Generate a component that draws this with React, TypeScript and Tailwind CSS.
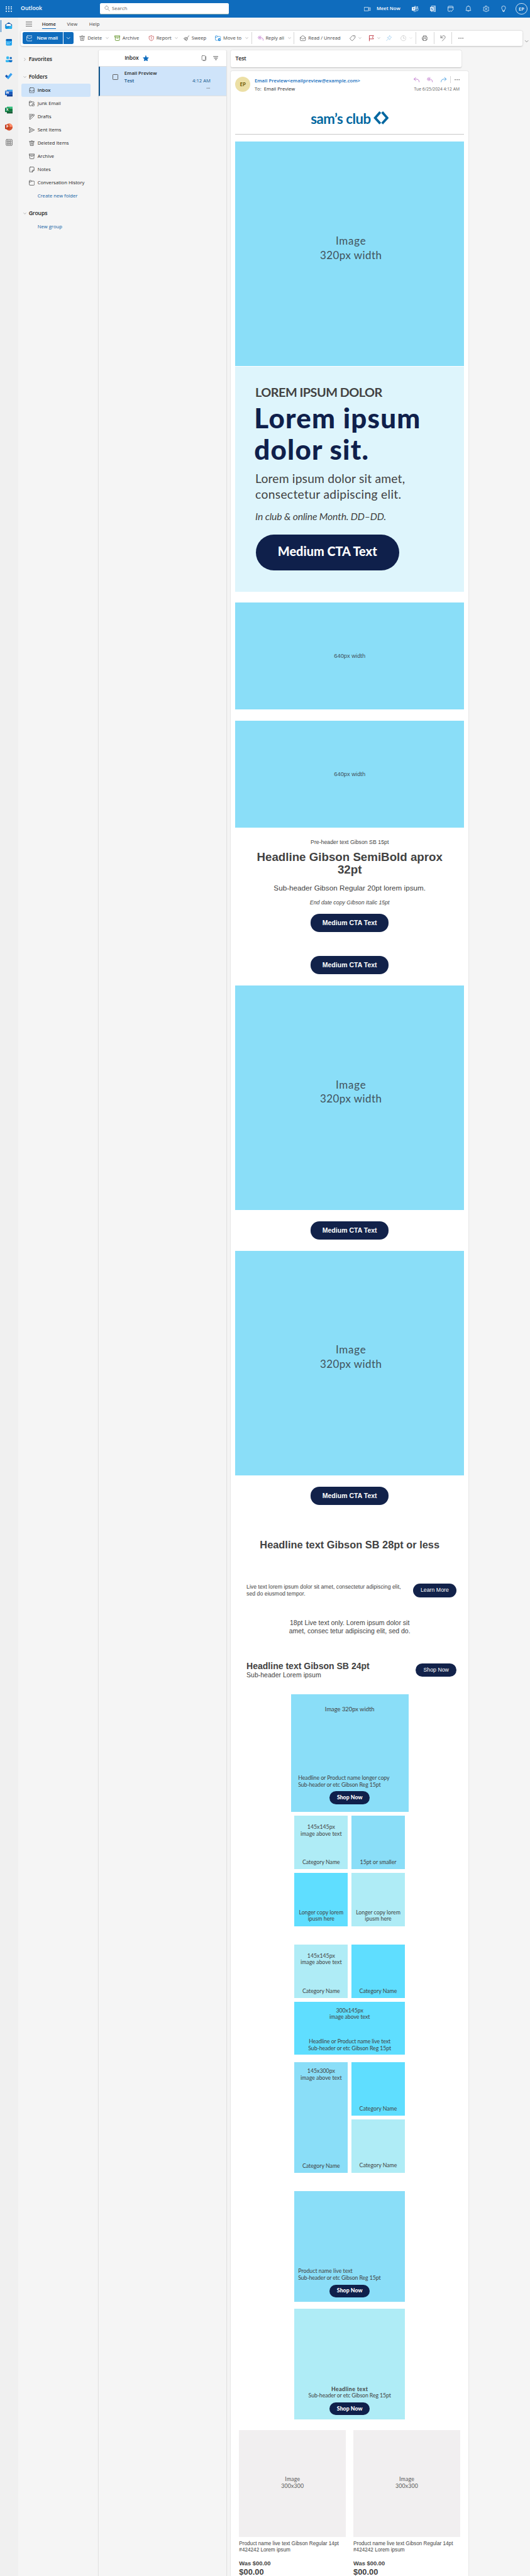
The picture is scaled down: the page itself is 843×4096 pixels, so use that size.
import type { ReactNode } from "react";

const lato = "font-['Lato','Open_Sans',sans-serif]";
const chev = "M4 6l4 4 4-4";

function Svg({ d, size = "size-4", color = "text-[#424242]", sw = 1.1, children }: { d?: string; size?: string; color?: string; sw?: number; children?: ReactNode }) {
  return (
    <svg viewBox="0 0 16 16" className={`${size} ${color} shrink-0`} fill="none" stroke="currentColor" strokeWidth={sw} strokeLinecap="round" strokeLinejoin="round">
      {d && <path d={d} />}
      {children}
    </svg>
  );
}

const icons = {
  trash: "M1 3.5h14M2.8 3.5l1.2 11h8l1.2-11M6 3.5V2.2C6 1 10 1 10 2.2v1.3M6.7 6.5v5M9.3 6.5v5",
  archive: "M1.2 1.5h13.6v3.4H1.2zM2.3 5v7.5a2 2 0 0 0 2 2h7.4a2 2 0 0 0 2-2V5M6.3 8h3.4",
  inbox: "M4 1h8a2 2 0 0 1 2 2v10a2 2 0 0 1-2 2H4a2 2 0 0 1-2-2V3a2 2 0 0 1 2-2zM2 8.5h3.5c.3 3 4.700 3 5 0H14",
  junk: "M6 14H3a2 2 0 0 1-2-2V3a1.500 1.500 0 0 1 1.500-1.500h3L7.500 3.500H12a2 2 0 0 1 2 2V6M1 5h4l2.500-1.500M11.500 8a3.600 3.600 0 1 0 .01 0M9 14l5-5",
  drafts: "M1 1.500h9M1 5h6M1 8.500h3M2 15l1-4.500L11.500 2a1.800 1.800 0 0 1 3 2.500L6 13zM10 3.500l3 2.500",
  sent: "M1 1l14 7-14 7 2-7zM3 8h6",
  notes: "M4 1h8a2 2 0 0 1 2 2v6.500L9 15H4a2 2 0 0 1-2-2V3a2 2 0 0 1 2-2zM14 9.500h-3.500a1.500 1.500 0 0 0-1.500 1.500v4",
  folder: "M3 14.500a2 2 0 0 1-2-2V3a1.500 1.500 0 0 1 1.500-1.500h3L7.500 3.500H13a2 2 0 0 1 2 2v7a2 2 0 0 1-2 2zM1 5.500h4l2.500-2",
  shield: "M8 1c2 1.500 4 2 6 2v5c0 3.500-2.500 6-6 7-3.500-1-6-3.500-6-7V3c2 0 4-.5 6-2zM8 4.500V9M8 11.300v.2",
  sweep: "M15 1L10 7M6 6l5 4.500-3.500 4.500L1 9.500zM7 6.500c1.500-1.200 4 .8 3.500 3M3.500 8.500l4.500 4M4 12l1.500-2",
  reply: "M5.500 2L1 6.500 5.500 11M1 6.500h6c4.500 0 8 2.500 8 7.500",
  replyAll: "M4.500 2L.7 6.500l3.800 4.500M8.500 2L4.700 6.500l3.800 4.500M4.700 6.500H8c4 0 7 2.500 7 7.500",
  forward: "M10.500 2L15 6.500 10.500 11M15 6.500H9c-4.500 0-8 2.500-8 7.500",
  read: "M1 6l7-5 7 5v7a1.800 1.800 0 0 1-1.800 1.800H2.800A1.800 1.800 0 0 1 1 13zM1 6.500l7 4 7-4",
  tag: "M9 1h4.500A1.500 1.500 0 0 1 15 2.500V7l-7 7.500a1.500 1.500 0 0 1-2 0L1.500 10a1.500 1.500 0 0 1 0-2zM11.500 4.300v.2",
  flag: "M2.500 15.500V1H14l-3 4.500 3 4.500H2.500",
  pin: "M10 1l5 5-4 2-1 4.500L3.500 6 8 5zM6.500 9.500L1 15",
  clock: "M8 1a7 7 0 1 0 .01 0M8 4v4.500h3.500",
  print: "M4 5V1.500h8V5M4 12H2.500A1.500 1.500 0 0 1 1 10.500V7a2 2 0 0 1 2-2h10a2 2 0 0 1 2 2v3.500a1.500 1.500 0 0 1-1.500 1.500H12M4 9h8v5.500H4z",
  undo: "M2 1v6h6M2 7l4.500-4.500c4-3.500 9.500 1 6.500 5.500L6 15.500",
};

function Dots() {
  return (
    <Svg size="h-4 w-[14px]">
      <g fill="#424242" stroke="none"><circle cx="2" cy="8" r="1.500" /><circle cx="8" cy="8" r="1.500" /><circle cx="14" cy="8" r="1.500" /></g>
    </Svg>
  );
}

function TopBar() {
  return (
    <header className="flex h-12 shrink-0 items-center bg-[#0f6cbd] text-white">
      <div className="ml-4 grid grid-cols-3 gap-x-[3px] gap-y-[2.500px]">
        {Array.from({ length: 9 }, (_, i) => <i key={i} className="size-[3.500px] rounded-full bg-white" />)}
      </div>
      <b className="ml-[24px] w-[216px] text-[15px] font-semibold">Outlook</b>
      <div className="flex h-8 w-[350px] items-center rounded-[4px] border-b border-[#8aa] bg-white pl-[11px]">
        <Svg color="text-[#616161]" size="size-[15px]" d="M6.500 1a5 5 0 1 0 .01 0M10.300 10l4.700 5" />
        <span className="ml-[6px] text-[13.100px] text-[#616161]">Search</span>
      </div>
      <div className="ml-[367px] flex items-center">
        <Svg size="size-[18px]" color="text-white" d="M1 4h10v8.500H1zM11 7l4-2.500v7.500l-4-2.500" />
        <span className="ml-4 w-[66px] whitespace-nowrap text-[13.100px] font-semibold">Meet Now</span>
        <svg viewBox="0 0 18 18" className="ml-[30px] size-[18px]" fill="none" stroke="#fff" strokeWidth="1.300">
          <circle cx="9" cy="3.500" r="2" /><circle cx="15" cy="4" r="1.500" /><path d="M9 7h8v4a3 3 0 0 1-3 3M12 7v6a4 4 0 0 1-7 2.500" /><path d="M1 4.500h7.500V13H1z" fill="#fff" /><path d="M3 7h4M5 7v4" stroke="#0f6cbd" />
        </svg>
        <svg viewBox="0 0 16 18" className="ml-[31px] h-[18px] w-4" fill="none" stroke="#fff" strokeWidth="1.300">
          <path d="M4 4V1h11v16H4v-3M12 1v16M12 6.500h3M12 11.500h3" /><path d="M.5 4.500h9v9h-9z" fill="#fff" /><path d="M3 12V6l4 6V6" stroke="#0f6cbd" />
        </svg>
        <Svg size="ml-[33px] size-[17px]" color="text-white" sw={1.3} d="M6 14.500H3a2 2 0 0 1-2-2v-9a2 2 0 0 1 2-2h9a2 2 0 0 1 2 2V7M1 5h13M7 12.500l2.500 2.500L15 8.500" />
        <Svg size="ml-[31px] size-[17px]" color="text-white" sw={1.2} d="M8 1a5 5 0 0 0-5 5v3.500L1.800 12.500h12.400L13 9.500V6a5 5 0 0 0-5-5zM6 12.700c0 2.800 4 2.800 4 0" />
        <Svg size="ml-[30px] size-[18px]" color="text-white" sw={1.2} d="M6.500 1h3l.5 2 1.600.9 2-.6 1.400 2.500L13.600 7.200v1.700L15 10.300l-1.500 2.500-2-.6-1.500.9-.5 2h-3l-.5-2-1.600-.9-2 .6L1 10.300l1.400-1.400V7.200L1 5.800l1.500-2.500 2 .6L6 3zM8 6a2 2 0 1 0 .01 0" />
        <Svg size="ml-[30px] size-[17px]" color="text-white" sw={1.2} d="M6 12.500C6 10 3 9 3 5.800a5 5 0 0 1 10 0C13 9 10 10 10 12.500zM6 12.500v1a2 2 0 0 0 4 0v-1" />
        <div className="ml-[24px] flex size-8 items-center justify-center rounded-full border border-white/80 text-[12.500px] font-semibold">EP</div>
      </div>
    </header>
  );
}

function Office({ letter, dark, main, light, round }: { letter: string; dark: string; main: string; light: string; round?: boolean }) {
  return (
    <div className="relative h-5 w-[21px]">
      <svg viewBox="0 0 21 20" className="size-full">
        {round ? (
          <><circle cx="11" cy="10" r="9.500" fill={light} /><path d="M11 .5A9.500 9.500 0 0 1 20.500 10H11z" fill="#ff8f6b" /><path d="M1.500 10h19a9.500 9.500 0 0 1-19 0z" fill="#d35230" /></>
        ) : (
          <><path d="M5 1h15.500v5H5z" fill={light} /><path d="M5 6h15.500v8H5z" fill={main} /><path d="M5 14h15.500v5.500H5z" fill={dark} /></>
        )}
        <rect x="0" y="4" width="12" height="12" rx="1" fill={round ? dark : main} />
      </svg>
      <b className="absolute left-0 top-[4px] w-3 text-center text-[9.500px] leading-3 text-white">{letter}</b>
    </div>
  );
}

function Rail() {
  return (
    <nav className="relative flex w-[49px] shrink-0 flex-col items-center bg-[#f0f0f0] pt-3">
      <div className="absolute left-[2px] top-[7px] h-8 w-[2px] bg-[#0f6cbd]" />
      <div className="flex h-[46px] items-start"><svg viewBox="0 0 20 18" className="h-5 w-[20px]"><path d="M1 6l9-6 9 6v9a3 3 0 0 1-3 3H4a3 3 0 0 1-3-3z" fill="#0f56a8" /><path d="M3.500 5.500C5 3.500 15 3.500 16.500 5.500V10h-13z" fill="#fff" /><path d="M1 7.500l9 5 9-5V15a3 3 0 0 1-3 3H4a3 3 0 0 1-3-3z" fill="#28b5f0" /><path d="M1 8l10 6-7 4a3 3 0 0 1-3-3z" fill="#1493e0" /></svg></div>
      <div className="flex h-[46px] items-start"><svg viewBox="0 0 18 18" className="size-[18px]"><rect x="1" y="0" width="16" height="18" rx="2.500" fill="#22a5f0" /><path d="M1 5V2.500A2.500 2.500 0 0 1 3.500 0h11A2.500 2.500 0 0 1 17 2.500V5z" fill="#0f63b5" /><g fill="#fff"><path d="M8 8h2v2H8zM12 8h2v2h-2zM4 8h2v2H4zM4 12h2v2H4zM8 12h2v2H8z" /></g></svg></div>
      <div className="flex h-[46px] items-start"><svg viewBox="0 0 18 18" className="size-[18px]"><circle cx="5.500" cy="5" r="4" fill="#35b8f1" /><circle cx="14" cy="5.500" r="3" fill="#1268bd" /><path d="M0 11h10v3.500c0 4-10 4-10 0z" fill="#35b8f1" /><path d="M8 11h10v2.500c0 4-6 4.500-9 2.500z" fill="#1272c9" /></svg></div>
      <div className="flex h-[45px] items-start"><svg viewBox="0 0 20 18" className="h-[18px] w-5"><path d="M0 8.500l4-4 5 5-4 4.500z" fill="#1755b0" /><path d="M4.500 13L15.500 0 20 4 8.500 17.500z" fill="#37a0f0" /></svg></div>
      <div className="h-[46px]"><Office letter="W" dark="#103f91" main="#185abd" light="#41a5ee" /></div>
      <div className="h-[46px]"><Office letter="X" dark="#185c37" main="#107c41" light="#33c481" /></div>
      <div className="h-[43px]"><Office letter="P" dark="#c43e1c" main="#c43e1c" light="#ed6c47" round /></div>
      <Svg size="size-[19px]" color="text-[#616161]" sw={1.2} d="M3 1h10a2 2 0 0 1 2 2v10a2 2 0 0 1-2 2H3a2 2 0 0 1-2-2V3a2 2 0 0 1 2-2zM4 4h3v3H4zM9.300 4h3v3h-3zM4 9.300h3v3H4zM9.300 9.300h3v3h-3z" />
    </nav>
  );
}

function Tool({ w, icon, label, chevron, color }: { w: string; icon: ReactNode; label?: string; chevron?: string; color?: string }) {
  return (
    <div className={`flex shrink-0 items-center ${w}`}>
      {icon}
      {label && <span className="ml-[6px] whitespace-nowrap">{label}</span>}
      {chevron && <span className={`ml-auto flex ${chevron}`}><Svg size="-mx-[2px] size-3" d={chev} color={color ?? "text-[#757575]"} /></span>}
    </div>
  );
}

function Bar({ w }: { w: string }) {
  return <div className={`h-8 shrink-0 ${w}`}><div className="h-8 w-px bg-[#d6d6d6]" /></div>;
}

function Ribbon() {
  return (
    <div className="flex items-end">
      <div className="ml-2 flex h-10 w-[1363px] items-center rounded-[4px] bg-white pl-1 shadow-[0_1px_4px_rgba(0,0,0,0.22)]">
        <div className="flex h-8 w-[110px] items-center rounded-l-[4px] bg-[#0f6cbd] pl-[10px] text-white">
          <Svg size="size-[17px]" color="text-white" sw={1.2} d="M3 1.500h10a2 2 0 0 1 2 2v9a2 2 0 0 1-2 2H3a2 2 0 0 1-2-2v-9a2 2 0 0 1 2-2zM1 4.500l7 4.500 7-4.500" />
          <span className="ml-3 font-semibold tracking-[-0.020em]">New mail</span>
        </div>
        <div className="ml-px mr-4 flex h-8 w-7 items-center justify-center rounded-r-[4px] bg-[#0f6cbd]"><Svg color="text-white" sw={1.4} d={chev} /></div>
        <Tool w="w-[95px]" label="Delete" chevron="pr-4" icon={<Svg d={icons.trash} />} />
        <Tool w="w-[92px]" label="Archive" icon={<Svg d={icons.archive} color="text-[#498205]" sw={1.3} />} />
        <Tool w="w-[96px]" label="Report" chevron="pr-4" icon={<Svg d={icons.shield} color="text-[#bc2f32]" />} />
        <Tool w="w-[86px]" label="Sweep" icon={<Svg d={icons.sweep} />} />
        <Tool w="w-[99px]" label="Move to" chevron="pr-[9px]" icon={<Svg d="M7 14H3a2 2 0 0 1-2-2V3a1.500 1.500 0 0 1 1.500-1.500h3L7.500 3.500H13a2 2 0 0 1 2 2V7M1 5.500h4l2.500-2" color="text-[#0078d4]"><circle cx="12" cy="12" r="4" fill="#0078d4" stroke="none" /><path d="M10 12h4M12.500 10.500L14 12l-1.500 1.500" stroke="#fff" /></Svg>} />
        <Bar w="w-4" />
        <Tool w="w-[99px]" label="Reply all" chevron="pr-2" icon={<Svg d={icons.replyAll} color="text-[#a33db5]" />} />
        <Bar w="w-[17px]" />
        <Tool w="w-[135px]" label="Read / Unread" icon={<Svg d={icons.read} />} />
        <Tool w="w-[50px]" chevron="pr-[18px]" icon={<Svg d={icons.tag} />} />
        <Tool w="w-[49px]" chevron="pr-[17px]" icon={<Svg d={icons.flag} color="text-[#b10e1c]" sw={1.3} />} />
        <Tool w="w-[39px]" icon={<Svg d={icons.pin} color="text-[#8cc4ee]" />} />
        <Tool w="w-[41px]" chevron="pr-[9px]" color="text-[#c8c8c8]" icon={<Svg d={icons.clock} color="text-[#bdbdbd]" />} />
        <Bar w="w-[17px]" />
        <Tool w="w-8" icon={<Svg d={icons.print} />} />
        <Bar w="w-[17px]" />
        <Tool w="w-8" icon={<Svg d={icons.undo} />} />
        <Bar w="w-[18px]" />
        <Dots />
      </div>
      <div className="mb-[3px] ml-1"><Svg size="size-4" d={chev} color="text-[#616161]" /></div>
    </div>
  );
}

const folders: [string, string][] = [
  ["Inbox", icons.inbox], ["Junk Email", icons.junk], ["Drafts", icons.drafts], ["Sent Items", icons.sent],
  ["Deleted Items", icons.trash], ["Archive", icons.archive], ["Notes", icons.notes], ["Conversation History", icons.folder],
];

function GroupTitle({ open, children }: { open?: boolean; children: string }) {
  return (
    <div className="flex h-9 items-center pl-[3px] text-[15px] font-semibold tracking-[-0.020em] text-[#242424]">
      <Svg size="size-3" color="text-[#757575]" sw={1.2} d={open ? chev : "M6 3.500l4.500 4.500L6 12.500"} />
      <span className="ml-[5px]">{children}</span>
    </div>
  );
}

function Folders() {
  return (
    <div className="w-[217px] shrink-0 pl-[9px] pr-[20px] pt-[6.500px] text-[13.100px] text-[#242424]">
      <GroupTitle>Favorites</GroupTitle>
      <div className="h-3" />
      <GroupTitle open>Folders</GroupTitle>
      {folders.map(([name, d], i) => (
        <div key={name} className={`flex h-9 items-center rounded-[4px] pl-5 ${i === 0 ? "bg-[#cfe4fa] font-semibold" : ""}`}>
          <Svg d={d} color="text-[#242424]" />
          <span className="ml-2 whitespace-nowrap">{name}</span>
        </div>
      ))}
      <div className="flex h-9 items-center pl-11 text-[#115ea3]">Create new folder</div>
      <div className="h-[11px]" />
      <GroupTitle open>Groups</GroupTitle>
      <div className="flex h-9 items-center pl-11 text-[#115ea3]">New group</div>
    </div>
  );
}

function MessageList() {
  return (
    <div className="w-[351px] shrink-0 rounded-t-[4px] border-x border-[#e2e2e2] shadow-[0_0_2px_rgba(0,0,0,0.12)]">
      <div className="flex h-[45px] items-center rounded-t-[4px] border-b border-[#e0e0e0] bg-white">
        <span className="ml-[71px] text-[14.500px] font-semibold tracking-[-0.020em] text-[#242424]">Inbox</span>
        <Svg size="ml-[11px] size-[17px]" color="text-[#0f6cbd]"><path fill="currentColor" d="M8 1l2.100 4.600 4.900.6-3.600 3.400.9 5L8 12.200 3.700 14.600l.9-5L1 6.200l4.900-.6z" /></Svg>
        <Svg size="ml-[142px] size-[15px]" d="M4 1h6a2 2 0 0 1 2 2v9a2 2 0 0 1-2 2H4a2 2 0 0 1-2-2V3a2 2 0 0 1 2-2zM14 3.500V12c0 2.500-1.500 3.500-4 3.500H6" />
        <Svg size="ml-[17px] size-[15px]" color="text-[#242424]" sw={1.4} d="M1 3.500h14M3.500 8h9M6 12.500h4" />
      </div>
      <div className="flex h-20 border-b border-l-4 border-b-[#e0e0e0] border-l-[#0f548c] bg-[#cfe4fa] text-[13.100px] font-semibold">
        <div className="ml-[35px] mt-5 size-4 rounded-[2px] border-[1.500px] border-[#616161]" />
        <div className="ml-4 flex-1 pr-[43px] pt-[9px] leading-5">
          <div className="text-[#242424]">Email Preview</div>
          <div className="flex justify-between text-[#0f548c]"><span>Test</span><span className="font-medium">4:12 AM</span></div>
          <div className="flex justify-end pt-1"><Svg size="size-[11px]"><g fill="#616161" stroke="none"><circle cx="3" cy="8" r="1.500" /><circle cx="8" cy="8" r="1.500" /><circle cx="13" cy="8" r="1.500" /></g></Svg></div>
        </div>
      </div>
    </div>
  );
}

function MailHeader() {
  return (
    <div className="h-[192px]">
      <div className="flex h-[107px] pt-4">
        <div className="flex size-10 items-center justify-center rounded-full bg-[#ecdfa5] text-[14px] font-semibold text-[#6d5700]">EP</div>
        <div className="ml-3 text-[13.100px] leading-[22px]">
          <div className="font-semibold tracking-[0.005em] text-[#0f6cbd]">Email Preview&lt;emailpreview@example.com&gt;</div>
          <div className="whitespace-pre text-[#424242]">To:  <span className="text-[#242424]">Email Preview</span></div>
        </div>
        <div className="ml-auto pr-[11px]">
          <div className="-mt-[3px] flex h-5 items-center justify-end">
            <Svg d={icons.reply} color="text-[#a33db5]" />
            <Svg size="ml-5 size-4" d={icons.replyAll} color="text-[#a33db5]" />
            <Svg size="ml-5 size-4" d={icons.forward} color="text-[#0078d4]" />
            <div className="ml-[10px] mr-3 h-5 w-px bg-[#d6d6d6]" />
            <Dots />
          </div>
          <div className="mt-2 text-[11.600px] leading-[18px] text-[#616161]">Tue 6/25/2024 4:12 AM</div>
        </div>
      </div>
      <div className={`flex h-16 pl-[204.500px] text-[#0067a0] ${lato}`}>
        <span className="-mt-[2px] w-[164px] whitespace-nowrap text-[38px] font-bold leading-[52px] tracking-[-0.800px]">sam’s club</span>
        <svg viewBox="0 0 42 36" className="ml-[6px] mt-[2.500px] h-9 w-[42px]" fill="none" stroke="#0067a0" strokeWidth="6.500">
          <path d="M18.500 2L4.600 17.800 18.500 33.500M23.500 2l13.900 15.800L23.500 33.500" />
        </svg>
      </div>
      <div className="h-px bg-[#c8c8c8]" />
    </div>
  );
}

function BigImage() {
  return (
    <div className={`h-[611px] bg-[#8adef8] pl-[7px] pt-[250.500px] text-center text-[29px] leading-[39px] text-[#42525c] ${lato}`}>
      <div className="tracking-[1.330px]">Image</div>
      <div className="tracking-[0.770px]">320px width</div>
    </div>
  );
}

function SmallImage() {
  return <div className="h-[290.500px] bg-[#8adef8] pt-[136.500px] text-center text-[16px] leading-5 text-[#42525c]">640px width</div>;
}

function Cta() {
  return <div className="mx-auto flex h-[50px] w-[211px] items-center justify-center whitespace-nowrap rounded-[24px] bg-[#12224a] text-[18px] font-bold text-white">Medium CTA Text</div>;
}

function Hero() {
  return (
    <div className={`mt-[2px] h-[611.500px] whitespace-nowrap bg-[#def5fc] pl-[54px] pt-[50.300px] text-[#424242] ${lato}`}>
      <div className="text-[34px] font-bold leading-10 tracking-[-0.940px]">LOREM IPSUM DOLOR</div>
      <div className="-ml-[3px] mt-[7.600px] text-[75px] font-black leading-[85px] tracking-[2.040px] text-[#0f204b]">Lorem ipsum<br />dolor sit.</div>
      <div className="mt-[14.500px] text-[33px] leading-[43px] tracking-[0.280px]">Lorem ipsum dolor sit amet,<br /><span className="tracking-[0.510px]">consectetur adipiscing elit.</span></div>
      <div className="mt-[22.200px] text-[27px] italic leading-[34px] tracking-[-0.300px]">In club &amp; online Month. DD–DD.</div>
      <div className="ml-[1px] mt-[31.800px] flex h-[97px] w-[390px] items-center justify-center rounded-full bg-[#0f204b] pb-[3px] text-[34px] font-black text-white">Medium CTA Text</div>
    </div>
  );
}

function ShopNow() {
  return <div className="mx-auto flex h-[35px] w-[109px] items-center justify-center rounded-full bg-[#0f204b] pb-[1px] text-[15px] font-black text-white">Shop Now</div>;
}

function Tile({ size = "h-[145px]", bg, top, bottom, pad = "pt-[22px] pb-[10px]" }: { size?: string; bg: string; top?: string; bottom: string; pad?: string }) {
  return (
    <div className={`flex flex-col justify-between whitespace-pre-line text-center ${size} ${bg} ${pad}`}>
      <div>{top}</div>
      <div>{bottom}</div>
    </div>
  );
}

const sky = "bg-[#8adef8]";
const pale = "bg-[#afecf6]";
const vivid = "bg-[#5fdeff]";

function Modules() {
  return (
    <div className={`mx-auto flex w-[320px] flex-col items-center text-[15px] leading-[18px] text-[#424242] ${lato}`}>
      <div className={`mt-[41px] h-[320px] w-[320px] pt-[31px] ${sky}`}>
        <div className="text-center text-[16px] leading-5">Image 320px width</div>
        <div className="mb-[8px] mt-[168px] whitespace-nowrap pl-5 tracking-[-0.090px]">Headline or Product name longer copy<br /><span className="tracking-[-0.190px]">Sub-header or etc Gibson Reg 15pt</span></div>
        <ShopNow />
      </div>
      <div className="mt-[10px] grid w-[300px] grid-cols-2 gap-[10px]">
        <Tile bg={pale} top={"145x145px\nimage above text"} bottom="Category Name" />
        <Tile bg={sky} bottom="15pt or smaller" />
        <Tile bg={vivid} bottom={"Longer copy lorem\nipusm here"} />
        <Tile bg={pale} bottom={"Longer copy lorem\nipusm here"} />
      </div>
      <div className="mt-[50px] grid w-[300px] grid-cols-2 gap-[10px]">
        <Tile bg={pale} top={"145x145px\nimage above text"} bottom="Category Name" />
        <Tile bg={vivid} bottom="Category Name" />
        <Tile size="col-span-2 h-[144px]" bg={vivid} pad="pt-[15px] pb-[8px] tracking-[-0.160px]" top={"300x145px\nimage above text"} bottom={"Headline or Product name live text\nSub-header or etc Gibson Reg 15pt"} />
      </div>
      <div className="mt-[21px] grid w-[300px] grid-cols-2 gap-[10px]">
        <Tile size="row-span-2" bg={sky} pad="pt-[15px] pb-[9px]" top={"145x300px\nimage above text"} bottom="Category Name" />
        <Tile bg={vivid} bottom="Category Name" />
        <Tile bg={pale} bottom="Category Name" />
      </div>
      <div className={`mt-[50px] h-[300px] w-[300px] pt-[209px] ${sky}`}>
        <div className="mb-[9px] whitespace-nowrap pl-[10px]">Product name live text<br /><span className="tracking-[-0.190px]">Sub-header or etc Gibson Reg 15pt</span></div>
        <ShopNow />
      </div>
      <div className={`mt-[20px] h-[300px] w-[300px] pt-[209px] ${pale}`}>
        <div className="mb-[9px] whitespace-nowrap text-center"><b className="tracking-[0.770px]">Headline text</b><br /><span className="tracking-[-0.190px]">Sub-header or etc Gibson Reg 15pt</span></div>
        <ShopNow />
      </div>
    </div>
  );
}

function Product() {
  return (
    <div className="w-[290.500px]">
      <div className={`h-[289px] bg-[#f1eff0] pt-[124px] text-center text-[15px] leading-[18px] tracking-[0.300px] text-[#5a5a5a] ${lato}`}>Image<br />300x300</div>
      <div className="mt-[11px] whitespace-nowrap text-[14px] leading-[17px]">Product name live text Gibson Regular 14pt<br />#424242 Lorem ipsum</div>
      <div className="mt-[19px] text-[16px] font-bold leading-5">Was $00.00</div>
      <div className="text-[22px] font-bold leading-6">$00.00</div>
    </div>
  );
}

function Newsletter() {
  return (
    <div className="font-['Liberation_Sans',Arial,sans-serif] text-[#424242]">
      <div className="h-[609px] overflow-hidden"><BigImage /></div>
      <Hero />
      <div className="h-[30.500px]" />
      <SmallImage />
      <div className="h-[30.500px]" />
      <SmallImage />
      <div className="whitespace-nowrap pt-[30px] text-center">
        <div className="text-[15px] leading-[18px]">Pre-header text Gibson SB 15pt</div>
        <div className="mt-[14.800px] text-[32px] font-bold leading-[34.500px]">Headline Gibson SemiBold aprox<br />32pt</div>
        <div className="mt-[19.700px] text-[20px] leading-6">Sub-header Gibson Regular 20pt lorem ipsum.</div>
        <div className="mb-[20.600px] mt-[19.300px] text-[15px] italic leading-[18px]">End date copy GIbson Italic 15pt</div>
      </div>
      <Cta />
      <div className="h-[65px]" />
      <Cta />
      <div className="h-[30px]" />
      <BigImage />
      <div className="h-[30px]" />
      <Cta />
      <div className="h-[30px]" />
      <BigImage />
      <div className="h-[30.500px]" />
      <Cta />
      <div className="mt-[91px] text-center text-[28px] font-bold leading-8">Headline text Gibson SB 28pt or less</div>
      <div className="mt-[90px] flex h-[37px] items-center justify-between whitespace-nowrap pl-[30px] pr-5">
        <div className="text-[15px] leading-[18.300px]">Live text lorem ipsum dolor sit amet, consectetur adipiscing elit,<br />sed do eiusmod tempor.</div>
        <div className="flex h-[37px] w-[119px] items-center justify-center rounded-full bg-[#12224a] text-[15px] text-white">Learn More</div>
      </div>
      <div className="mt-[58.500px] text-center text-[18px] leading-[22px]">18pt Live text only. Lorem ipsum dolor sit<br />amet, consec tetur adipiscing elit, sed do.</div>
      <div className="mt-[70.500px] flex items-center justify-between pl-[30px] pr-5">
        <div>
          <div className="text-[24px] font-bold leading-7">Headline text Gibson SB 24pt</div>
          <div className="text-[18px] leading-[22px]">Sub-header Lorem ipsum</div>
        </div>
        <div className="flex h-[37px] w-[111px] items-center justify-center rounded-full bg-[#12224a] text-[15px] text-white">Shop Now</div>
      </div>
      <Modules />
      <div className="mt-[30px] flex gap-5 pl-[10px]">
        <Product />
        <Product />
      </div>
    </div>
  );
}

export default function App() {
  return (
    <div className="flex h-[6999px] w-[1441px] flex-col overflow-hidden bg-[#f5f5f5] font-['Open_Sans','Noto_Sans',sans-serif] [zoom:0.5852]">
      <TopBar />
      <div className="flex min-h-0 flex-1">
        <Rail />
        <div className="flex min-w-0 flex-1 flex-col text-[13.100px] text-[#424242]">
          <div className="flex h-9 shrink-0 items-start pl-[21px] pt-[6px] leading-[22px]">
            <Svg size="mt-[2px] h-[18px] w-[18px]" sw={1.2} d="M.5 3h15M.5 8h15M.5 13h15" />
            <span className="ml-[26px] h-[25px] border-b-[3px] border-[#0f6cbd] font-semibold text-[#242424]">Home</span>
            <span className="ml-[30px]">View</span>
            <span className="ml-[32px]">Help</span>
          </div>
          <Ribbon />
          <div className="mt-[12.500px] flex min-h-0 flex-1">
            <Folders />
            <MessageList />
            <div className="ml-[11px] flex w-[645px] shrink-0 flex-col">
              <div className="flex h-[46.500px] w-[627px] shrink-0 items-center rounded-[4px] bg-white pl-3 text-[15px] font-semibold tracking-[-0.020em] text-[#242424] shadow-[0_1px_3px_rgba(0,0,0,0.22)]">Test</div>
              <div className="mt-[10px] flex-1 rounded-t-[4px] bg-white px-3 shadow-[0_0_3px_rgba(0,0,0,0.22)]">
                <MailHeader />
                <Newsletter />
              </div>
            </div>
          </div>
        </div>
      </div>
    </div>
  );
}
